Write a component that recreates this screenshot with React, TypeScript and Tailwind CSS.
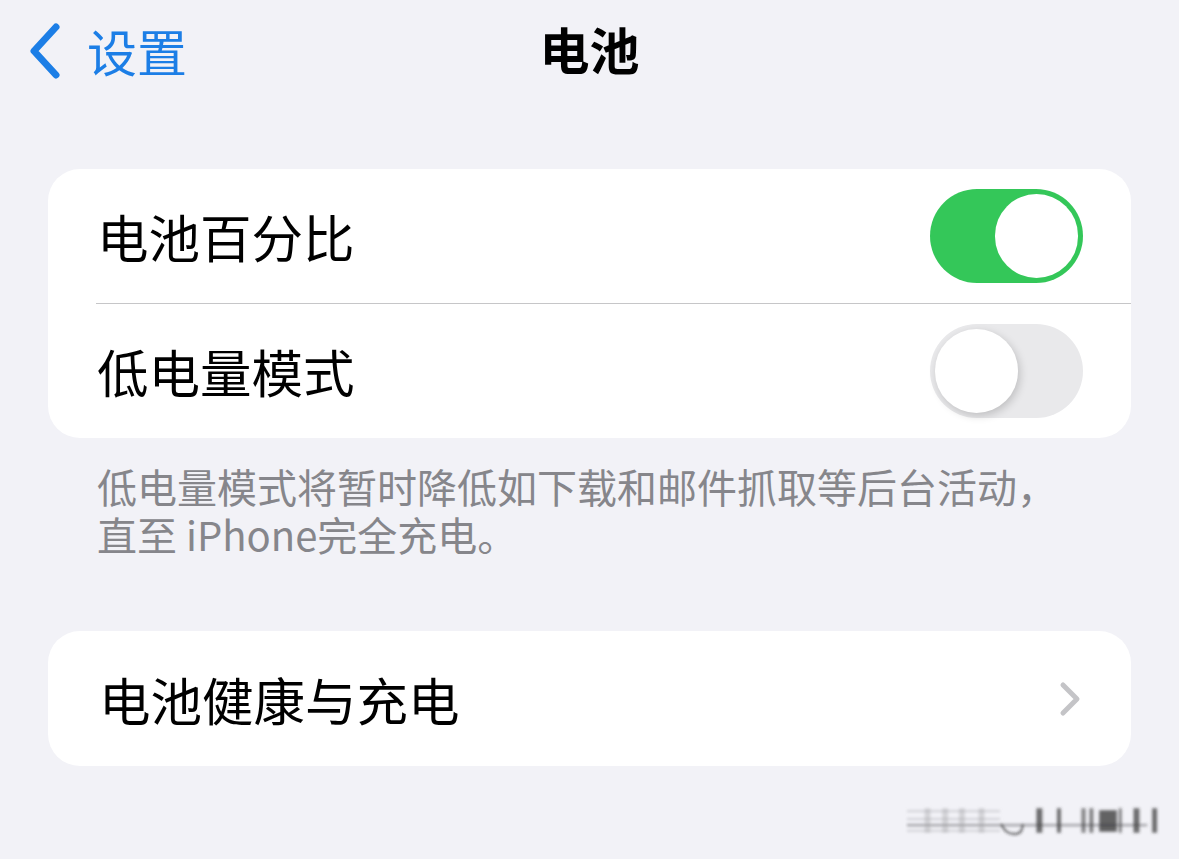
import React from "react";

const font = { fontFamily: '"Noto Sans CJK SC", "Noto Sans", sans-serif' };

function Toggle({ on }: { on: boolean }) {
  if (on) {
    return (
      <div className="relative w-[153px] h-[94px] rounded-full bg-[#34c759] shrink-0">
        <div className="absolute right-[5px] top-[5px] w-[83px] h-[84px] rounded-full bg-white" />
      </div>
    );
  }
  return (
    <div className="relative w-[153px] h-[94px] rounded-full bg-[#e9e9eb] shrink-0">
      <div className="absolute left-[5px] top-[5px] w-[83px] h-[84px] rounded-full bg-white shadow-[2px_3px_8px_rgba(0,0,0,0.18)]" />
    </div>
  );
}

export default function App() {
  return (
    <div className="w-[1179px] h-[859px] bg-[#f2f2f7] relative overflow-hidden" style={font}>
      {/* Header */}
      <div className="relative h-[100px] flex items-center">
        <div className="flex items-center pl-[28px]">
          <svg width="34" height="56" viewBox="0 0 34 56" className="mt-[2px]">
            <path d="M28 4 L6 28 L28 52" fill="none" stroke="#1c7ee6" strokeWidth="7" strokeLinecap="round" strokeLinejoin="round" />
          </svg>
          <span className="ml-[25px] text-[50px] leading-none text-[#1c7ee6]">设置</span>
        </div>
        <div className="absolute left-0 right-0 top-0 h-[100px] flex items-center justify-center pointer-events-none">
          <span className="text-[50px] leading-none font-bold text-black -mt-[4px]">电池</span>
        </div>
      </div>

      {/* Card 1 */}
      <div className="mx-[48px] mt-[69px] bg-white rounded-[32px] overflow-hidden">
        <div className="h-[134px] flex items-center justify-between pl-[49px] pr-[48px]">
          <span className="text-[51.5px] leading-none text-black">电池百分比</span>
          <Toggle on />
        </div>
        <div className="ml-[48px] h-px bg-[#c6c6c8]" />
        <div className="h-[134px] flex items-center justify-between pl-[49px] pr-[48px]">
          <span className="text-[51.5px] leading-none text-black">低电量模式</span>
          <Toggle on={false} />
        </div>
      </div>

      {/* Footer text */}
      <div className="mx-[48px] mt-[24px] pl-[49px] text-[40px] leading-[48px] text-[#86868b]">
        <div>低电量模式将暂时降低如下载和邮件抓取等后台活动，</div>
        <div>直至 iPhone完全充电。</div>
      </div>

      {/* Card 2 */}
      <div className="mx-[48px] mt-[73px] bg-white rounded-[32px] h-[135px] flex items-center justify-between pl-[51px] pr-[50px]">
        <span className="text-[51.5px] leading-none text-black">电池健康与充电</span>
        <svg width="22" height="36" viewBox="0 0 22 36">
          <path d="M4 4 L18 18 L4 32" fill="none" stroke="#c4c4c7" strokeWidth="5" strokeLinecap="round" strokeLinejoin="round" />
        </svg>
      </div>

      {/* Watermark */}
      <div className="absolute left-[905px] top-[800px]">
        <svg width="255" height="40" viewBox="0 0 260 40">
          <defs>
            <filter id="b" x="-20%" y="-50%" width="140%" height="200%">
              <feGaussianBlur stdDeviation="1.6" />
            </filter>
          </defs>
          <g filter="url(#b)">
            <rect x="2" y="10" width="95" height="2" fill="#9a9a9f" opacity="0.4" />
            <rect x="2" y="18" width="95" height="2" fill="#9a9a9f" opacity="0.4" />
            <rect x="2" y="24" width="245" height="2.5" fill="#55555a" opacity="0.5" />
            <rect x="2" y="30" width="95" height="2" fill="#9a9a9f" opacity="0.4" />
            <rect x="20" y="8" width="6" height="25" fill="#9a9a9f" opacity="0.35" />
            <rect x="38" y="8" width="6" height="25" fill="#9a9a9f" opacity="0.35" />
            <rect x="55" y="8" width="6" height="25" fill="#9a9a9f" opacity="0.35" />
            <rect x="75" y="8" width="6" height="25" fill="#9a9a9f" opacity="0.35" />
            <path d="M98 24 Q103 36 114 34 Q120 33 120 24" fill="none" stroke="#222" strokeWidth="2" opacity="0.7" />
            <rect x="134" y="8" width="6" height="25" fill="#333" opacity="0.7" />
            <rect x="155" y="8" width="4" height="25" fill="#333" opacity="0.7" />
            <rect x="180" y="8" width="4" height="25" fill="#333" opacity="0.6" />
            <rect x="188" y="8" width="4" height="25" fill="#333" opacity="0.6" />
            <rect x="198" y="10" width="18" height="22" fill="#333" opacity="0.75" />
            <rect x="218" y="8" width="3" height="25" fill="#333" opacity="0.6" />
            <rect x="233" y="8" width="6" height="25" fill="#333" opacity="0.7" />
            <rect x="252" y="8" width="5" height="25" fill="#333" opacity="0.7" />
          </g>
        </svg>
      </div>
    </div>
  );
}
